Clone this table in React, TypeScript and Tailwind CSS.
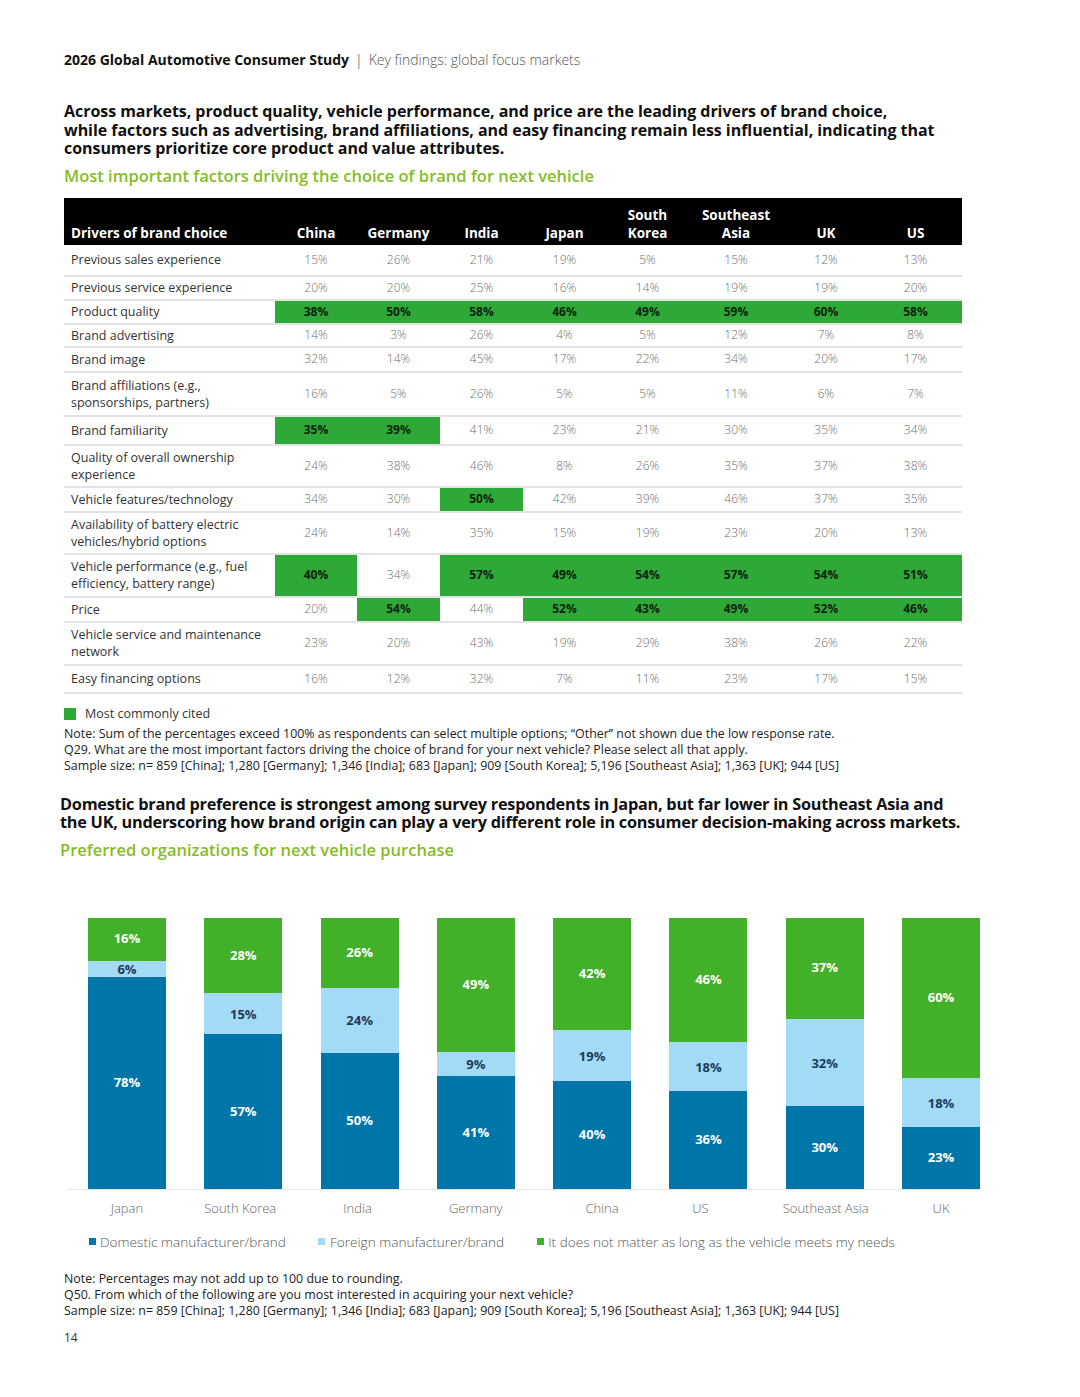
import React from "react";

const cols = ["China", "Germany", "India", "Japan", "South Korea", "Southeast Asia", "UK", "US"];
const gridCols = "grid grid-cols-[211px_82px_83px_83px_83px_83px_94px_86px_93px]";

type Row = { label: string; vals: string[]; hl: number[]; h: string };
const rows: Row[] = [
  { label: "Previous sales experience", vals: ["15%", "26%", "21%", "19%", "5%", "15%", "12%", "13%"], hl: [], h: "h-[32px]" },
  { label: "Previous service experience", vals: ["20%", "20%", "25%", "16%", "14%", "19%", "19%", "20%"], hl: [], h: "h-[24px]" },
  { label: "Product quality", vals: ["38%", "50%", "58%", "46%", "49%", "59%", "60%", "58%"], hl: [0, 1, 2, 3, 4, 5, 6, 7], h: "h-[24px]" },
  { label: "Brand advertising", vals: ["14%", "3%", "26%", "4%", "5%", "12%", "7%", "8%"], hl: [], h: "h-[23px]" },
  { label: "Brand image", vals: ["32%", "14%", "45%", "17%", "22%", "34%", "20%", "17%"], hl: [], h: "h-[25px]" },
  { label: "Brand affiliations (e.g., sponsorships, partners)", vals: ["16%", "5%", "26%", "5%", "5%", "11%", "6%", "7%"], hl: [], h: "h-[44px]" },
  { label: "Brand familiarity", vals: ["35%", "39%", "41%", "23%", "21%", "30%", "35%", "34%"], hl: [0, 1], h: "h-[29px]" },
  { label: "Quality of overall ownership experience", vals: ["24%", "38%", "46%", "8%", "26%", "35%", "37%", "38%"], hl: [], h: "h-[42px]" },
  { label: "Vehicle features/technology", vals: ["34%", "30%", "50%", "42%", "39%", "46%", "37%", "35%"], hl: [2], h: "h-[25px]" },
  { label: "Availability of battery electric vehicles/hybrid options", vals: ["24%", "14%", "35%", "15%", "19%", "23%", "20%", "13%"], hl: [], h: "h-[42px]" },
  { label: "Vehicle performance (e.g., fuel efficiency, battery range)", vals: ["40%", "34%", "57%", "49%", "54%", "57%", "54%", "51%"], hl: [0, 2, 3, 4, 5, 6, 7], h: "h-[43px]" },
  { label: "Price", vals: ["20%", "54%", "44%", "52%", "43%", "49%", "52%", "46%"], hl: [1, 3, 4, 5, 6, 7], h: "h-[25px]" },
  { label: "Vehicle service and maintenance network", vals: ["23%", "20%", "43%", "19%", "29%", "38%", "26%", "22%"], hl: [], h: "h-[43px]" },
  { label: "Easy financing options", vals: ["16%", "12%", "32%", "7%", "11%", "23%", "17%", "15%"], hl: [], h: "h-[28px]" },
];

type Bar = { name: string; d: number; f: number; n: number; shift: string };
const bars: Bar[] = [
  { name: "Japan", d: 78, f: 6, n: 16, shift: "" },
  { name: "South Korea", d: 57, f: 15, n: 28, shift: "-translate-x-[3px]" },
  { name: "India", d: 50, f: 24, n: 26, shift: "-translate-x-[2px]" },
  { name: "Germany", d: 41, f: 9, n: 49, shift: "" },
  { name: "China", d: 40, f: 19, n: 42, shift: "translate-x-[10px]" },
  { name: "US", d: 36, f: 18, n: 46, shift: "-translate-x-[8px]" },
  { name: "Southeast Asia", d: 30, f: 32, n: 37, shift: "-translate-x-[3px]" },
  { name: "UK", d: 23, f: 18, n: 60, shift: "" },
];

export default function App() {
  return (
    <div className="w-[1080px] h-[1397px] bg-white font-['Open_Sans',sans-serif] text-black">
      <div className="pt-[50px] pl-[64px]">
        <div className="text-[14px] leading-[20px]">
          <span className="font-bold text-[#111]">2026 Global Automotive Consumer Study</span>
          <span className="text-[#888] mx-[6px]">|</span>
          <span className="text-[#555] font-light">Key findings: global focus markets</span>
        </div>

        <div className="mt-[32px] whitespace-nowrap text-[16px] leading-[18.5px] font-bold text-[#111] tracking-[-0.05px]">
          Across markets, product quality, vehicle performance, and price are the leading drivers of brand choice,
          <br />
          while factors such as advertising, brand affiliations, and easy financing remain less influential, indicating that
          <br />
          consumers prioritize core product and value attributes.
        </div>
        <div className="mt-[7px] text-[16.5px] leading-[22px] font-semibold text-[#86bc25]">
          Most important factors driving the choice of brand for next vehicle
        </div>

        {/* Table */}
        <div className="mt-[11px] w-[898px]">
          <div className={`${gridCols} bg-black text-white font-bold text-[13.5px] leading-[18px] h-[47px] items-end pb-[3px]`}>
            <div className="pl-[7px]">Drivers of brand choice</div>
            {cols.map((c) => (
              <div key={c} className="text-center">
                {c.split(" ").map((w, i) => (
                  <div key={i}>{w}</div>
                ))}
              </div>
            ))}
          </div>
          {rows.map((r) => (
            <div key={r.label} className={`${gridCols} ${r.h} border-b-2 border-[#e3e3e3]`}>
              <div className="pl-[7px] pr-[8px] flex items-center text-[12.5px] leading-[17px] text-[#333]">{r.label}</div>
              {r.vals.map((v, i) => {
                const on = r.hl.includes(i);
                return (
                  <div
                    key={i}
                    className={
                      on
                        ? "flex items-center justify-center bg-[#2ea836] text-[12px] font-bold text-[#0d1f0d]"
                        : "flex items-center justify-center text-[12px] font-light text-[#6e6e6e]"
                    }
                  >
                    {v}
                  </div>
                );
              })}
            </div>
          ))}
        </div>

        <div className="mt-[12px] flex items-center text-[12.5px] leading-[16px] text-[#333]">
          <span className="w-[12px] h-[12px] bg-[#2ea836] mr-[9px] inline-block"></span>
          <span>Most commonly cited</span>
        </div>
        <div className="mt-[4px] text-[12.4px] leading-[16px] text-[#222]">
          <div>Note: Sum of the percentages exceed 100% as respondents can select multiple options; “Other” not shown due the low response rate.</div>
          <div>Q29. What are the most important factors driving the choice of brand for your next vehicle? Please select all that apply.</div>
          <div>Sample size: n= 859 [China]; 1,280 [Germany]; 1,346 [India]; 683 [Japan]; 909 [South Korea]; 5,196 [Southeast Asia]; 1,363 [UK]; 944 [US]</div>
        </div>
      </div>

      <div className="pl-[60px]">
        <div className="mt-[21px] whitespace-nowrap text-[16.3px] leading-[18.5px] font-bold text-[#111] tracking-[-0.25px]">
          Domestic brand preference is strongest among survey respondents in Japan, but far lower in Southeast Asia and
          <br />
          the UK, underscoring how brand origin can play a very different role in consumer decision-making across markets.
        </div>
        <div className="mt-[7px] text-[16.5px] leading-[22px] font-semibold text-[#86bc25]">
          Preferred organizations for next vehicle purchase
        </div>
      </div>

      {/* Chart */}
      <div className="mt-[57px] ml-[68px] w-[912px]">
        <div className="border-b border-[#e6e6e6] pl-[20px] flex gap-[38.4px] h-[272px]">
          {bars.map((b) => (
            <div key={b.name} className="w-[78px] h-[271px] flex flex-col text-[13px] font-bold">
              <div style={{ flexGrow: b.n }} className="basis-0 bg-[#43b02a] text-white flex items-center justify-center">
                {b.n}%
              </div>
              <div style={{ flexGrow: b.f }} className="basis-0 bg-[#a3dbf7] text-[#1e3a5a] flex items-center justify-center leading-[12px]">
                {b.f}%
              </div>
              <div style={{ flexGrow: b.d }} className="basis-0 bg-[#0076a8] text-white flex items-center justify-center">
                {b.d}%
              </div>
            </div>
          ))}
        </div>
        <div className="mt-[9px] pl-[20px] flex gap-[38.4px]">
          {bars.map((b) => (
            <div key={b.name} className={`w-[78px] text-center text-[13px] leading-[18px] text-[#666] font-light whitespace-nowrap ${b.shift}`}>
              <span className="inline-block">{b.name}</span>
            </div>
          ))}
        </div>
        <div className="mt-[16px] flex items-center text-[13.6px] leading-[18px] text-[#555] font-light">
          <span className="ml-[21px] w-[7px] h-[7px] bg-[#0076a8] mr-[4px]"></span>
          <span>Domestic manufacturer/brand</span>
          <span className="ml-[32px] w-[7px] h-[7px] bg-[#a3dbf7] mr-[5px]"></span>
          <span>Foreign manufacturer/brand</span>
          <span className="ml-[33px] w-[7px] h-[7px] bg-[#43b02a] mr-[4px]"></span>
          <span>It does not matter as long as the vehicle meets my needs</span>
        </div>
      </div>

      <div className="pl-[64px]">
        <div className="mt-[20px] text-[12.4px] leading-[16px] text-[#222]">
          <div>Note: Percentages may not add up to 100 due to rounding.</div>
          <div>Q50. From which of the following are you most interested in acquiring your next vehicle?</div>
          <div>Sample size: n= 859 [China]; 1,280 [Germany]; 1,346 [India]; 683 [Japan]; 909 [South Korea]; 5,196 [Southeast Asia]; 1,363 [UK]; 944 [US]</div>
        </div>
        <div className="mt-[11px] text-[12px] leading-[16px] text-[#333]">14</div>
      </div>
    </div>
  );
}
